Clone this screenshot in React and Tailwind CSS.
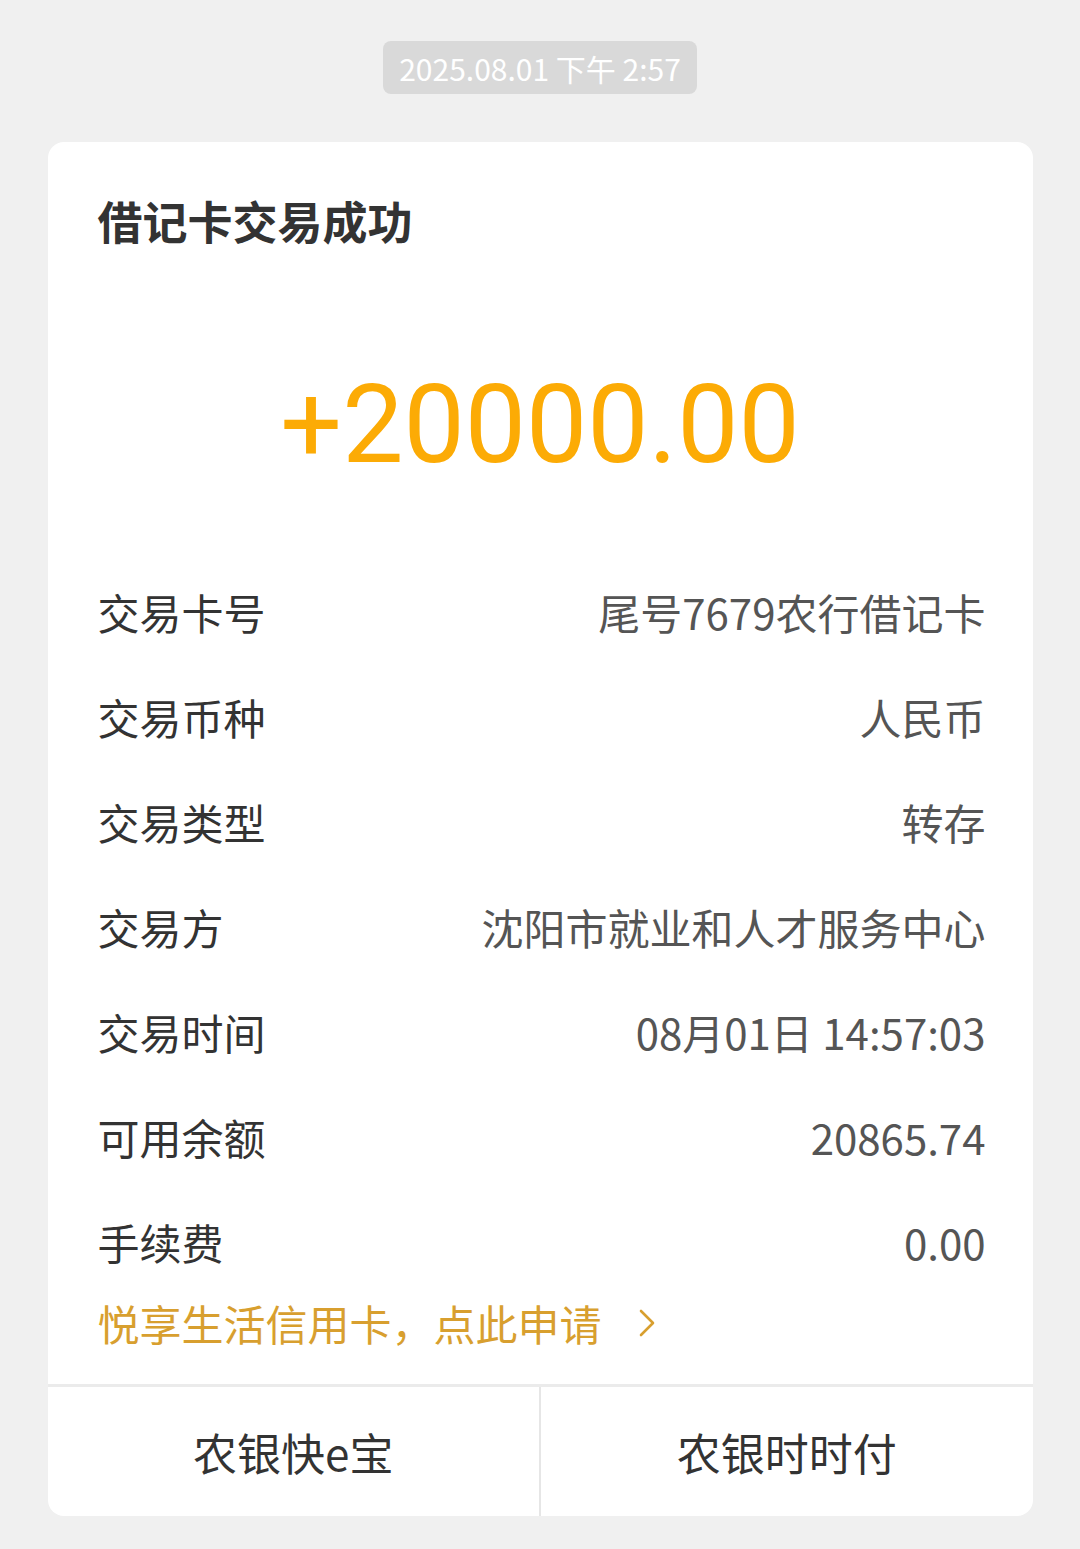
import React from "react";

const rows = [
  ["交易卡号", "尾号7679农行借记卡"],
  ["交易币种", "人民币"],
  ["交易类型", "转存"],
  ["交易方", "沈阳市就业和人才服务中心"],
  ["交易时间", "08月01日 14:57:03"],
  ["可用余额", "20865.74"],
  ["手续费", "0.00"],
];

export default function App() {
  return (
    <div
      className="min-h-[1549px] w-[1080px] bg-[#f0f0f0] flex flex-col items-center"
      style={{ fontFamily: '"Noto Sans CJK SC", "Noto Sans", sans-serif' }}
    >
      <div className="mt-[41px] h-[53px] px-[16px] rounded-[8px] bg-[#d9d9d9] flex items-center text-white text-[30px] leading-none">
        2025.08.01 下午 2:57
      </div>
      <div className="mt-[48px] w-[985px] bg-white rounded-[16px] overflow-hidden flex flex-col">
        <div className="pt-[49px] px-[50px] h-[109px] text-[45px] leading-[60px] font-bold text-[#333333]">
          借记卡交易成功
        </div>
        <div className="h-[308px] pt-[120px] flex items-start justify-center">
          <span
            className="text-[#fcab05] text-[109px] leading-none"
            style={{ fontFamily: 'Roboto, "Noto Sans", sans-serif' }}
          >
            +20000.00
          </span>
        </div>
        <div className="pl-[50px] pr-[47px] flex flex-col">
          {rows.map(([k, v]) => (
            <div key={k} className="h-[105px] flex items-center justify-between text-[42px]">
              <span className="text-[#333333]">{k}</span>
              <span className="text-[#555555]">{v}</span>
            </div>
          ))}
          <div className="h-[57px] flex items-center text-[#d89f2f] text-[42px]">
            <span>悦享生活信用卡，点此申请</span>
            <svg className="ml-[36px]" width="18" height="30" viewBox="0 0 18 30" fill="none">
              <path d="M3 3 L15 15 L3 27" stroke="#d89f2f" strokeWidth="2.6" strokeLinecap="round" strokeLinejoin="round" />
            </svg>
          </div>
        </div>
        <div className="mt-[33px] h-[3px] bg-[#ebebeb]" />
        <div className="h-[129px] flex text-[#333333] text-[44px]">
          <div className="flex-1 flex items-center justify-center">农银快e宝</div>
          <div className="w-[2px] bg-[#e6e6e6]" />
          <div className="flex-1 flex items-center justify-center">农银时时付</div>
        </div>
      </div>
    </div>
  );
}
